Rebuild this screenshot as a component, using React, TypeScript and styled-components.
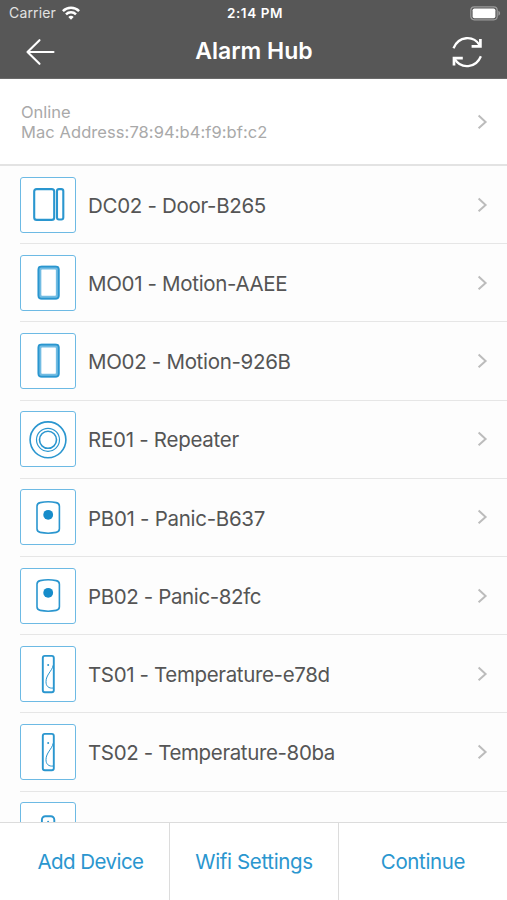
import React from "react";
import styled, { createGlobalStyle } from "styled-components";

const BLUE = "#2a96cf";

const GlobalStyle = createGlobalStyle`
  *, *::before, *::after { box-sizing: border-box; }
  html, body, #root { margin: 0; padding: 0; height: 100%; }
  body {
    background: #fff;
    font-family: Inter, "Liberation Sans", sans-serif;
    overflow: hidden;
  }
`;

const Screen = styled.div`
  width: 507px;
  height: 900px;
  display: flex;
  flex-direction: column;
  overflow: hidden;
  background: #fdfdfd;
`;

const Header = styled.header`
  flex: none;
  height: 79px;
  background: #575757;
  color: #fff;
  border-bottom: 1px solid #6a6a6a;
`;

const StatusBar = styled.div`
  height: 27px;
  display: grid;
  grid-template-columns: 1fr auto 1fr;
  align-items: center;
  padding: 0 6px 0 9px;
`;

const CarrierGroup = styled.div`
  display: flex;
  align-items: center;
  gap: 6px;
  color: #e2e2e2;
`;

const BatteryGroup = styled.div`
  display: flex;
  justify-content: flex-end;
`;

const Label = styled.span<{ $size: number; $weight?: number; $track?: number }>`
  font-size: ${(p) => p.$size}px;
  font-weight: ${(p) => p.$weight ?? 400};
  letter-spacing: ${(p) => p.$track ?? 0}px;
  line-height: 1.2;
  white-space: nowrap;
`;

const NavBar = styled.div`
  height: 50px;
  display: grid;
  grid-template-columns: 1fr auto 1fr;
  align-items: center;
  padding: 0 24px 0 25px;
`;

const NavButton = styled.button<{ $end?: boolean }>`
  justify-self: ${(p) => (p.$end ? "end" : "start")};
  display: flex;
  padding: 0;
  border: 0;
  background: none;
  color: #fff;
`;

const HubInfo = styled.section`
  flex: none;
  height: 87px;
  display: flex;
  align-items: center;
  justify-content: space-between;
  padding: 0 19px 0 21px;
  background: #fff;
  border-bottom: 2px solid #e3e3e3;
`;

const HubLines = styled.div`
  display: flex;
  flex-direction: column;
  padding-top: 2px;
  color: #a9a9a9;
`;

const DeviceList = styled.ul`
  flex: 1;
  min-height: 0;
  margin: 0;
  padding: 0 0 0 20px;
  list-style: none;
  overflow: hidden;
`;

const DeviceRow = styled.li`
  height: 78.2px;
  display: flex;
  align-items: center;
  padding-right: 19px;
  border-bottom: 1.5px solid #e6e6e6;
  color: #555;
`;

const DeviceTile = styled.div`
  width: 56px;
  height: 56px;
  flex: none;
  margin-right: 12px;
  border: 1.5px solid #6dbae4;
  border-radius: 3px;
  background: #fff;
  display: flex;
  align-items: center;
  justify-content: center;
`;

const DeviceName = styled.div`
  flex: 1;
  display: flex;
  padding-top: 3px;
`;

const Footer = styled.footer`
  flex: none;
  height: 78px;
  display: grid;
  grid-template-columns: 170px 169px 168px;
  background: #fff;
  border-top: 1px solid #dcdcdc;
`;

const FooterButton = styled.button<{ $inset?: number }>`
  padding: 2px 0 0 ${(p) => p.$inset ?? 0}px;
  border: 0;
  border-right: 1px solid #dcdcdc;
  background: none;
  color: ${BLUE};
  font-family: inherit;
  &:last-child { border-right: 0; }
`;

function Chevron() {
  return (
    <svg width="11" height="16" viewBox="0 0 11 16" fill="none" stroke="#bcbcbc" strokeWidth="2">
      <path d="M1.6 1.5 8.6 7.9 1.6 14.3" />
    </svg>
  );
}

function WifiIcon() {
  return (
    <svg width="18" height="14" viewBox="0 0 18 14" fill="none" stroke="#fff" strokeWidth="2.5">
      <path d="M.9 5.1a11.5 11.5 0 0 1 16.2 0" />
      <path d="M4 8.3a7.1 7.1 0 0 1 10 0" />
      <path d="M9 13.8 6.3 11a3.8 3.8 0 0 1 5.4 0Z" fill="#fff" stroke="none" />
    </svg>
  );
}

function BatteryIcon() {
  return (
    <svg width="31" height="15" viewBox="0 0 31 15">
      <rect x=".8" y=".8" width="26.4" height="13" rx="3.5" fill="none" stroke="#9b9b9b" strokeWidth="1.2" />
      <rect x="2.6" y="2.4" width="22.8" height="9.8" rx="1.8" fill="#fff" />
      <path d="M28.4 4.8v5c1-.5 1.7-1.4 1.7-2.5s-.7-2-1.7-2.5Z" fill="#9b9b9b" />
    </svg>
  );
}

function BackIcon() {
  return (
    <svg width="30" height="28" viewBox="0 0 30 28" fill="none" stroke="#fff" strokeWidth="2.1" strokeLinecap="round" strokeLinejoin="round">
      <path d="M14.5 2.2 2.5 14l12 11.8M2.5 14h26" />
    </svg>
  );
}

function RefreshIcon() {
  return (
    <svg width="32" height="32" viewBox="0 0 32 32" fill="none" stroke="#fff" strokeWidth="2.3">
      <path d="M2.5 12.2C7.6-.1 22.4-1 28.6 9.2" />
      <path d="M29.4 2.9v7.4h-8.8" strokeWidth="2.7" />
      <path d="M29.9 20.2C24.8 32.5 10 33.4 3.8 23.2" />
      <path d="M3 29.5v-7.4h8.8" strokeWidth="2.7" />
    </svg>
  );
}

type Kind = "door" | "motion" | "repeater" | "panic" | "temperature" | "sensor";

function DeviceIcon({ kind }: { kind: Kind }) {
  return (
    <svg width="53" height="53" viewBox="0 0 53 53" fill="none" stroke={BLUE} strokeWidth="1.6">
      {kind === "door" && (
        <g strokeWidth="2.1">
          <rect x="12.2" y="11.1" width="20" height="30.8" rx="2.5" />
          <rect x="35" y="11.1" width="6.3" height="30.4" rx="2" />
        </g>
      )}
      {kind === "motion" && (
        <>
          <rect x="17.5" y="11.6" width="18.2" height="30" rx="2.5" stroke="#72bce3" strokeWidth="3.7" />
          <rect x="16.5" y="10.6" width="20.2" height="32" rx="2.5" strokeWidth="1.8" />
        </>
      )}
      {kind === "repeater" && (
        <>
          <circle cx="26" cy="26.8" r="17.9" strokeWidth="1.6" />
          <circle cx="26" cy="26.8" r="11.5" strokeWidth="1.2" />
          <circle cx="26" cy="26.8" r="8.5" strokeWidth="1.6" />
        </>
      )}
      {kind === "panic" && (
        <>
          <path d="M15 15.2c0-2.3 1.1-3.2 3.2-3.6 5.4-1.1 10.6-1.1 16 0 2.1.4 3.2 1.3 3.2 3.6v22.6c0 2.3-1.1 3.2-3.2 3.6-5.4 1.1-10.6 1.1-16 0-2.1-.4-3.2-1.3-3.2-3.6Z" />
          <circle cx="26.2" cy="23.8" r="4.9" fill="#168cca" stroke="none" />
        </>
      )}
      {kind === "temperature" && (
        <>
          <rect x="20.8" y="8.9" width="11" height="36.4" rx="2" strokeWidth="1.9" />
          <path d="M31.2 18.2c-1.2 6-7.2 9.5-7.2 16.5 0 4.3 2.5 7 7.4 6.3" strokeWidth="1" />
          <circle cx="26.2" cy="18.1" r="1" fill={BLUE} stroke="none" />
        </>
      )}
      {kind === "sensor" && (
        <>
          <rect x="19.9" y="12.2" width="12.4" height="36" rx="3.5" strokeWidth="1.9" />
          <circle cx="26.1" cy="17.8" r="1" fill={BLUE} stroke="none" />
        </>
      )}
    </svg>
  );
}

const devices: { name: string; kind: Kind; track: number }[] = [
  { name: "DC02 - Door-B265", kind: "door", track: -0.31 },
  { name: "MO01 - Motion-AAEE", kind: "motion", track: -0.33 },
  { name: "MO02 - Motion-926B", kind: "motion", track: -0.31 },
  { name: "RE01 - Repeater", kind: "repeater", track: -0.27 },
  { name: "PB01 - Panic-B637", kind: "panic", track: -0.29 },
  { name: "PB02 - Panic-82fc", kind: "panic", track: -0.38 },
  { name: "TS01 - Temperature-e78d", kind: "temperature", track: -0.36 },
  { name: "TS02 - Temperature-80ba", kind: "temperature", track: -0.37 },
];

export default function App() {
  return (
    <Screen>
      <GlobalStyle />
      <Header>
        <StatusBar>
          <CarrierGroup>
            <Label $size={14} $track={0.15}>Carrier</Label>
            <WifiIcon />
          </CarrierGroup>
          <Label $size={13.5} $weight={600} $track={0.6}>2:14 PM</Label>
          <BatteryGroup><BatteryIcon /></BatteryGroup>
        </StatusBar>
        <NavBar>
          <NavButton aria-label="Back"><BackIcon /></NavButton>
          <Label $size={23} $weight={600}>Alarm Hub</Label>
          <NavButton $end aria-label="Refresh"><RefreshIcon /></NavButton>
        </NavBar>
      </Header>
      <HubInfo>
        <HubLines>
          <Label $size={16.5}>Online</Label>
          <Label $size={16.5} $track={0.07}>Mac Address:78:94:b4:f9:bf:c2</Label>
        </HubLines>
        <Chevron />
      </HubInfo>
      <DeviceList>
        {devices.map((d) => (
          <DeviceRow key={d.name}>
            <DeviceTile><DeviceIcon kind={d.kind} /></DeviceTile>
            <DeviceName><Label $size={20.5} $track={d.track}>{d.name}</Label></DeviceName>
            <Chevron />
          </DeviceRow>
        ))}
        <DeviceRow>
          <DeviceTile><DeviceIcon kind="sensor" /></DeviceTile>
        </DeviceRow>
      </DeviceList>
      <Footer>
        <FooterButton $inset={12}><Label $size={20.5} $track={-0.55}>Add Device</Label></FooterButton>
        <FooterButton><Label $size={20.5} $track={-0.35}>Wifi Settings</Label></FooterButton>
        <FooterButton><Label $size={20.5} $track={-0.35}>Continue</Label></FooterButton>
      </Footer>
    </Screen>
  );
}
